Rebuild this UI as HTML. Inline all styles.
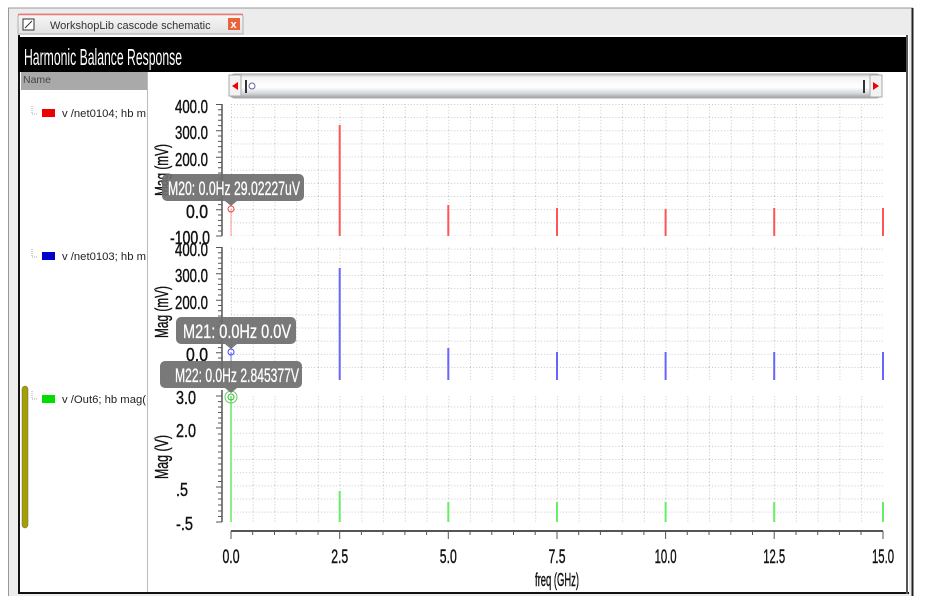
<!DOCTYPE html>
<html><head><meta charset="utf-8"><style>
html,body{margin:0;padding:0;background:#fff;width:938px;height:603px;overflow:hidden;font-family:"Liberation Sans",sans-serif}
</style></head><body>
<svg width="938" height="603" viewBox="0 0 938 603" xmlns="http://www.w3.org/2000/svg" font-family="Liberation Sans, sans-serif">
<defs>
<pattern id="g" x="231" y="104" width="21.73" height="13.15" patternUnits="userSpaceOnUse">
<line x1="0.5" y1="0" x2="0.5" y2="13.15" stroke="#c8c8c8" stroke-width="1" stroke-dasharray="1,2"/>
<line x1="0" y1="0.5" x2="21.73" y2="0.5" stroke="#c8c8c8" stroke-width="1" stroke-dasharray="1,2"/>
</pattern>
<linearGradient id="sb" x1="0" y1="0" x2="0" y2="1">
<stop offset="0" stop-color="#bfc3c8"/><stop offset="0.15" stop-color="#f4f4f4"/><stop offset="0.55" stop-color="#ffffff"/><stop offset="0.8" stop-color="#d6d8da"/><stop offset="1" stop-color="#9aa0a8"/>
</linearGradient>
<linearGradient id="tab" x1="0" y1="0" x2="0" y2="1"><stop offset="0" stop-color="#f7f7f7"/><stop offset="1" stop-color="#e2e2e2"/></linearGradient>
</defs>
<rect x="0" y="0" width="938" height="603" fill="#fff"/>
<rect x="8" y="8" width="905" height="588" fill="#ececec"/>
<line x1="8" y1="8" x2="913" y2="8" stroke="#999"/>
<line x1="8.5" y1="8" x2="8.5" y2="596" stroke="#999"/>
<line x1="912.5" y1="8" x2="912.5" y2="596" stroke="#222" stroke-width="2"/>
<path d="M18 34 V17 Q18 14 21 14 H240 Q243 14 243 17 V34 Z" fill="url(#tab)" stroke="#b0b0b0"/>
<line x1="18" y1="14.5" x2="243" y2="14.5" stroke="#e77" stroke-width="1.5"/>
<rect x="23" y="19" width="11" height="11" fill="#fff" stroke="#333"/>
<line x1="25" y1="28" x2="32" y2="21" stroke="#333"/>
<text x="50" y="29" font-size="11" fill="#333">WorkshopLib cascode schematic</text>
<rect x="228" y="18" width="12" height="12" fill="#e8643c"/>
<text x="230.5" y="28" font-size="11" fill="#fff" font-weight="bold">x</text>
<rect x="18" y="35" width="891" height="559" fill="#fff"/>
<line x1="19" y1="35" x2="19" y2="594" stroke="#111" stroke-width="2"/>
<line x1="18" y1="593" x2="909" y2="593" stroke="#111" stroke-width="2"/>
<line x1="907" y1="35" x2="907" y2="594" stroke="#555" stroke-width="2"/>
<rect x="18" y="37" width="888" height="35" fill="#000"/>
<text x="24" y="65" font-size="23" fill="#fff" textLength="158" lengthAdjust="spacingAndGlyphs">Harmonic Balance Response</text>
<rect x="21" y="72" width="127" height="18" fill="#a9a9a9"/>
<text x="23" y="83" font-size="10.5" fill="#444">Name</text>
<line x1="147.5" y1="72" x2="147.5" y2="592" stroke="#bbb"/>
<rect x="21" y="90" width="126" height="502" fill="#fff"/>
<g font-size="11" fill="#222">
<path d="M32 106 V114 H38" stroke="#aaa" fill="none" stroke-dasharray="1,1"/>
<rect x="42" y="109" width="13" height="8" fill="#e00"/>
<text x="62" y="117" textLength="84" lengthAdjust="spacingAndGlyphs">v /net0104; hb m</text>
<path d="M32 249 V257 H38" stroke="#aaa" fill="none" stroke-dasharray="1,1"/>
<rect x="42" y="252" width="13" height="8" fill="#00c"/>
<text x="62" y="260" textLength="84" lengthAdjust="spacingAndGlyphs">v /net0103; hb m</text>
<path d="M32 391 V399 H38" stroke="#aaa" fill="none" stroke-dasharray="1,1"/>
<rect x="42" y="395" width="13" height="8" fill="#0d0"/>
<text x="62" y="403" textLength="84" lengthAdjust="spacingAndGlyphs">v /Out6; hb mag(</text>
</g>
<rect x="22" y="386" width="6" height="142" rx="3" fill="#a3a000" stroke="#666" stroke-width="0.5"/>
<rect x="229" y="74" width="653" height="24" rx="6" fill="url(#sb)" stroke="#aaa"/>
<rect x="229" y="75" width="12" height="21" fill="#f2f2f2" stroke="#aaa"/>
<path d="M238 82 L232 86 L238 90 Z" fill="#e00"/>
<rect x="245" y="80" width="2" height="13" fill="#333"/>
<circle cx="252" cy="86" r="3" fill="none" stroke="#66a"/>
<rect x="863" y="80" width="2" height="13" fill="#333"/>
<rect x="870" y="75" width="12" height="22" fill="#f2f2f2" stroke="#aaa"/>
<path d="M873 82 L879 86 L873 90 Z" fill="#e00"/>
<rect x="231" y="104" width="652" height="132" fill="url(#g)"/>
<rect x="231" y="247" width="652" height="133" fill="url(#g)"/>
<rect x="231" y="396" width="652" height="126" fill="url(#g)"/>
<g stroke="#555" stroke-width="1.5">
<line x1="222" y1="104" x2="222" y2="236"/>
<line x1="222" y1="247" x2="222" y2="380"/>
<line x1="222" y1="390" x2="222" y2="522"/>
<line x1="231" y1="531" x2="883" y2="531" stroke-width="2"/>
</g>
<g stroke="#555" stroke-width="1">
<path d="M216 104.5h6M218 109.8h4M218 115h4M218 120.3h4M218 125.6h4M216 130.8h6M218 136h4M218 141.4h4M218 146.6h4M218 152h4M216 157.2h6M218 162.5h4M218 167.7h4M218 173h4M218 178.3h4M216 183.5h6M218 188.8h4M218 194h4M218 199.3h4M218 204.6h4M216 209.8h6M218 215h4M218 220.4h4M218 225.6h4M218 231h4M216 236h6"/>
<path d="M216 247.5h6M218 252.8h4M218 258h4M218 263.3h4M218 268.6h4M216 273.8h6M218 279h4M218 284.4h4M218 289.6h4M218 295h4M216 300.2h6M218 305.5h4M218 310.7h4M218 316h4M218 321.3h4M216 326.5h6M218 331.8h4M218 337h4M218 342.3h4M218 347.6h4M216 352.8h6M218 358h4M218 363.4h4M218 368.6h4M218 374h4M216 379.5h6"/>
<path d="M216 396h6M218 401.6h4M218 407h4M218 412.5h4M218 418h4M218 423h4M216 428h6M218 434h4M218 440h4M218 446h4M218 452h4M218 458h4M218 464h4M218 470h4M218 476h4M218 481.5h4M216 487h6M218 493h4M218 499h4M218 505h4M218 511h4M218 516.5h4M216 522h6"/>
<path d="M231 531v8M252.7 531v4M274.5 531v4M296.2 531v4M318 531v4M339.7 531v8M361.4 531v4M383 531v4M404.9 531v4M426.6 531v4M448.3 531v8M470 531v4M491.8 531v4M513.5 531v4M535.2 531v4M557 531v8M578.7 531v4M600.4 531v4M622 531v4M643.9 531v4M665.6 531v8M687.3 531v4M709 531v4M730.8 531v4M752.5 531v4M774.2 531v8M796 531v4M817.7 531v4M839.4 531v4M861 531v4M883 531v8"/>
</g>
<g font-size="18" fill="#111" stroke="#111" stroke-width="0.4" text-anchor="end">
<text x="208" y="113" textLength="33" lengthAdjust="spacingAndGlyphs">400.0</text>
<text x="208" y="139" textLength="33" lengthAdjust="spacingAndGlyphs">300.0</text>
<text x="208" y="166" textLength="33" lengthAdjust="spacingAndGlyphs">200.0</text>
<text x="208" y="218" textLength="22" lengthAdjust="spacingAndGlyphs">0.0</text>
<text x="210" y="244" textLength="40" lengthAdjust="spacingAndGlyphs">-100.0</text>
<text x="208" y="256" textLength="33" lengthAdjust="spacingAndGlyphs">400.0</text>
<text x="208" y="282" textLength="33" lengthAdjust="spacingAndGlyphs">300.0</text>
<text x="208" y="309" textLength="33" lengthAdjust="spacingAndGlyphs">200.0</text>
<text x="208" y="361" textLength="22" lengthAdjust="spacingAndGlyphs">0.0</text>
<text x="196" y="404" textLength="20" lengthAdjust="spacingAndGlyphs">3.0</text>
<text x="196" y="437" textLength="20" lengthAdjust="spacingAndGlyphs">2.0</text>
<text x="188" y="496" textLength="12" lengthAdjust="spacingAndGlyphs">.5</text>
<text x="193" y="530" textLength="17" lengthAdjust="spacingAndGlyphs">-.5</text>
</g>
<g font-size="18" fill="#111" stroke="#111" stroke-width="0.4" text-anchor="middle">
<text transform="translate(168 170) rotate(-90)" textLength="52" lengthAdjust="spacingAndGlyphs">Mag (mV)</text>
<text transform="translate(168 312) rotate(-90)" textLength="52" lengthAdjust="spacingAndGlyphs">Mag (mV)</text>
<text transform="translate(168 457) rotate(-90)" textLength="44" lengthAdjust="spacingAndGlyphs">Mag (V)</text>
</g>
<g font-size="19" fill="#111" stroke="#111" stroke-width="0.4" text-anchor="middle">
<text x="231" y="563" textLength="17" lengthAdjust="spacingAndGlyphs">0.0</text>
<text x="339.7" y="563" textLength="17" lengthAdjust="spacingAndGlyphs">2.5</text>
<text x="448.3" y="563" textLength="17" lengthAdjust="spacingAndGlyphs">5.0</text>
<text x="557" y="563" textLength="17" lengthAdjust="spacingAndGlyphs">7.5</text>
<text x="665.6" y="563" textLength="22" lengthAdjust="spacingAndGlyphs">10.0</text>
<text x="774.2" y="563" textLength="22" lengthAdjust="spacingAndGlyphs">12.5</text>
<text x="883" y="563" textLength="22" lengthAdjust="spacingAndGlyphs">15.0</text>
<text x="557" y="586" font-size="18" textLength="44" lengthAdjust="spacingAndGlyphs">freq (GHz)</text>
</g>
<g stroke="#f55" stroke-width="2">
<line x1="231" y1="209" x2="231" y2="236" stroke="#f99" stroke-width="1"/>
<line x1="339.7" y1="125" x2="339.7" y2="236"/>
<line x1="448.3" y1="205" x2="448.3" y2="236"/>
<line x1="557" y1="208" x2="557" y2="236"/>
<line x1="665.6" y1="209" x2="665.6" y2="236"/>
<line x1="774.2" y1="208" x2="774.2" y2="236"/>
<line x1="883" y1="208" x2="883" y2="236"/>
</g>
<circle cx="231" cy="209" r="3" fill="none" stroke="#e44"/>
<g stroke="#66f" stroke-width="2">
<line x1="231" y1="352" x2="231" y2="380" stroke="#77f" stroke-width="1"/>
<line x1="339.7" y1="268" x2="339.7" y2="380"/>
<line x1="448.3" y1="348" x2="448.3" y2="380"/>
<line x1="557" y1="352" x2="557" y2="380"/>
<line x1="665.6" y1="352" x2="665.6" y2="380"/>
<line x1="774.2" y1="352" x2="774.2" y2="380"/>
<line x1="883" y1="352" x2="883" y2="380"/>
</g>
<circle cx="231" cy="352" r="3" fill="none" stroke="#44f"/>
<g stroke="#6e6" stroke-width="2">
<line x1="231" y1="396" x2="231" y2="522" stroke-width="1.5"/>
<line x1="339.7" y1="491" x2="339.7" y2="522"/>
<line x1="448.3" y1="502" x2="448.3" y2="522"/>
<line x1="557" y1="502" x2="557" y2="522"/>
<line x1="665.6" y1="502" x2="665.6" y2="522"/>
<line x1="774.2" y1="502" x2="774.2" y2="522"/>
<line x1="883" y1="502" x2="883" y2="522"/>
</g>
<circle cx="231" cy="397" r="3" fill="none" stroke="#3b3"/>
<circle cx="231" cy="397" r="6" fill="none" stroke="#6c6"/>
<g fill="#6e6e6e" fill-opacity="0.92">
<rect x="162" y="174" width="142" height="27" rx="5"/>
<path d="M225 201 L231 206 L237 201 Z"/>
<rect x="176" y="317" width="120" height="27" rx="5"/>
<path d="M225 344 L231 349 L237 344 Z"/>
<rect x="160" y="361" width="142" height="27" rx="5"/>
<path d="M225 388 L231 393 L237 388 Z"/>
</g>
<g font-size="19" fill="#fff" stroke="#fff" stroke-width="0.3">
<text x="168" y="195" textLength="132" lengthAdjust="spacingAndGlyphs">M20: 0.0Hz 29.02227uV</text>
<text x="183" y="338" textLength="108" lengthAdjust="spacingAndGlyphs">M21: 0.0Hz 0.0V</text>
<text x="175" y="382" textLength="124" lengthAdjust="spacingAndGlyphs">M22: 0.0Hz 2.845377V</text>
</g>
</svg>
</body></html>
